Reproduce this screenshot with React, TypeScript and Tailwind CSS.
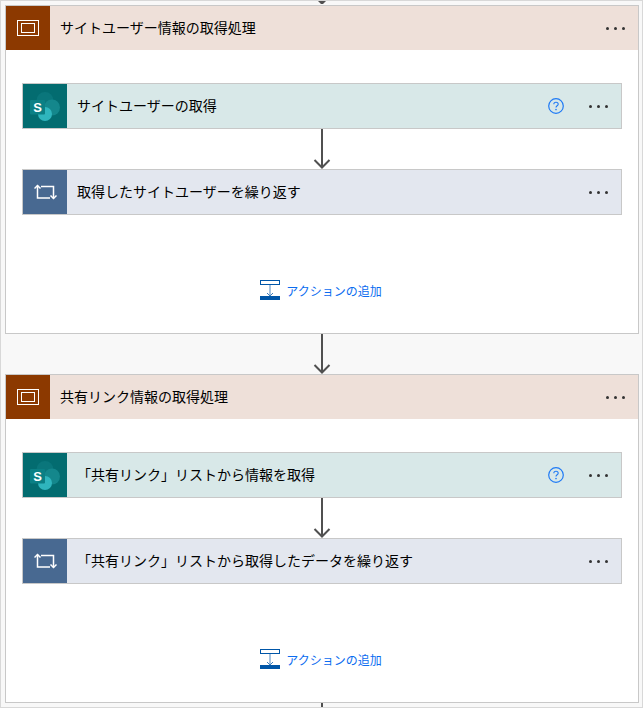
import { ReactNode } from 'react';

const font = { fontFamily: '"Noto Sans CJK JP", "Noto Sans", sans-serif' };

function ScopeIcon() {
  return (
    <svg width="22" height="16" viewBox="0 0 22 16" fill="none" stroke="#fff">
      <rect x="0.5" y="0.5" width="21" height="15" strokeWidth="1" />
      <rect x="4.5" y="3.5" width="13" height="9" strokeWidth="1" />
    </svg>
  );
}

function SharePointIcon() {
  return (
    <svg width="30" height="29" viewBox="0 0 30 29">
      <circle cx="15" cy="8.5" r="8.5" fill="#0a767b" />
      <circle cx="22" cy="15.5" r="8" fill="#14878c" />
      <circle cx="15" cy="22" r="7" fill="#2fb5bd" />
      <rect x="0" y="8" width="15" height="14.5" rx="1" fill="#0b8085" />
      <text x="7.5" y="20" textAnchor="middle" fontSize="13" fontWeight="700" fill="#fff" fontFamily="Liberation Sans, sans-serif">
        S
      </text>
    </svg>
  );
}

function LoopIcon() {
  return (
    <svg width="23" height="16" viewBox="0 0 23 16" fill="none" stroke="#fff" strokeWidth="1.5">
      <path d="M3.5 1.5V14H16" />
      <path d="M7 2.5H19.5V14.5" />
      <path d="M0.5 4.5L3.5 1.5L6.5 4.5" />
      <path d="M16.5 11.5L19.5 14.5L22.5 11.5" />
    </svg>
  );
}

function Dots() {
  return (
    <div className="flex gap-[5px] items-center">
      <span className="w-[3px] h-[3px] rounded-full bg-[#333]" />
      <span className="w-[3px] h-[3px] rounded-full bg-[#333]" />
      <span className="w-[3px] h-[3px] rounded-full bg-[#333]" />
    </div>
  );
}

function HelpIcon() {
  return (
    <svg width="16" height="16" viewBox="0 0 16 16" fill="none" stroke="#1f7af5">
      <circle cx="8" cy="8" r="7.3" strokeWidth="1.2" />
      <path d="M5.8 6.2C5.8 5 6.8 4.2 8 4.2s2.2.8 2.2 2c0 1.6-2.2 1.6-2.2 3.3" strokeWidth="1.1" />
      <circle cx="8" cy="11.6" r="0.8" fill="#1f7af5" stroke="none" />
    </svg>
  );
}

function Arrow({ height }: { height: number }) {
  return (
    <svg width="20" height={height} viewBox={`0 0 20 ${height}`} fill="none" stroke="#505050" strokeWidth="2">
      <path d={`M10 0V${height - 2}`} />
      <path d={`M2.5 ${height - 9}L10 ${height - 1.5}L17.5 ${height - 9}`} />
    </svg>
  );
}

function Action({ icon, iconBg, bg, title, help }: { icon: ReactNode; iconBg: string; bg: string; title: string; help?: boolean }) {
  return (
    <div className={`flex h-[46px] border border-[#c8c8c8] ${bg}`}>
      <div className={`w-[44px] flex items-center justify-center ${iconBg}`}>{icon}</div>
      <div className="flex-1 pl-[10px] pb-[2px] flex items-center text-[14px] text-[#000] leading-none">{title}</div>
      {help && (
        <div className="flex items-center mr-[25px]">
          <HelpIcon />
        </div>
      )}
      <div className="flex items-center pr-[13px]">
        <Dots />
      </div>
    </div>
  );
}

function AddAction() {
  return (
    <div className="flex items-center justify-center gap-[6px] pr-[2px]">
      <svg width="20" height="20" viewBox="0 0 20 20" fill="none">
        <rect x="0.5" y="0.5" width="19" height="4" stroke="#0056a8" />
        <path d="M10 5v11" stroke="#6d9ccb" strokeWidth="1.2" />
        <path d="M7 13l3 3 3-3" stroke="#3f7fbd" strokeWidth="1" />
        <rect x="0" y="16" width="20" height="4" fill="#0056a8" />
      </svg>
      <span className="text-[12px] text-[#0b6cf0] leading-none mt-[2px]">アクションの追加</span>
    </div>
  );
}

function Scope({ title, first, second }: { title: string; first: string; second: string }) {
  return (
    <div className="border border-[#c8c8c8] bg-white h-[329px] flex flex-col">
      <div className="flex h-[44px] bg-[#eee0d9] items-center">
        <div className="w-[44px] h-full bg-[#8c3900] flex items-center justify-center">
          <ScopeIcon />
        </div>
        <div className="flex-1 pl-[10px] pb-[2px] text-[14px] text-[#000] leading-none">{title}</div>
        <div className="pr-[13px]">
          <Dots />
        </div>
      </div>
      <div className="px-[16px] pt-[33px]">
        <Action icon={<SharePointIcon />} iconBg="bg-[#036c70]" bg="bg-[#d8e8e8]" title={first} help />
        <div className="flex justify-center h-[40px]">
          <Arrow height={40} />
        </div>
        <Action icon={<LoopIcon />} iconBg="bg-[#486991]" bg="bg-[#e3e7ef]" title={second} />
      </div>
      <div className="pt-[65px]">
        <AddAction />
      </div>
    </div>
  );
}

export default function App() {
  return (
    <div className="w-[643px] h-[708px] overflow-hidden bg-[#f8f8f8] border border-[#d8d8d8] pl-[4px] pr-[3px] flex flex-col" style={font}>
      <div className="h-[4px] flex justify-center overflow-hidden">
        <svg width="20" height="4" viewBox="0 0 20 4">
          <path d="M6 0h8l-3 3h-2z" fill="#505050" />
        </svg>
      </div>
      <Scope title="サイトユーザー情報の取得処理" first="サイトユーザーの取得" second="取得したサイトユーザーを繰り返す" />
      <div className="flex justify-center h-[40px]">
        <Arrow height={40} />
      </div>
      <Scope
        title="共有リンク情報の取得処理"
        first="「共有リンク」リストから情報を取得"
        second="「共有リンク」リストから取得したデータを繰り返す"
      />
      <div className="flex justify-center h-[4px] overflow-hidden">
        <div className="w-[2px] h-full bg-[#505050]" />
      </div>
    </div>
  );
}
